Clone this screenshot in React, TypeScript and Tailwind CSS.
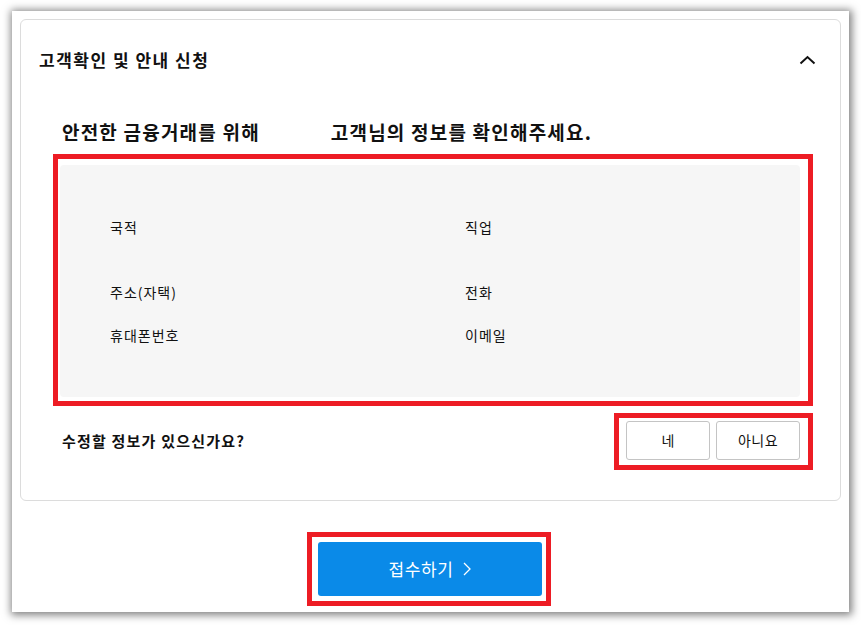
import React from "react";

const font = { fontFamily: '"Noto Sans CJK KR", "Noto Sans", sans-serif' };

function ChevronUp() {
  return (
    <svg width="17" height="10" viewBox="0 0 17 10" fill="none">
      <path d="M1.5 8.5 L8.5 2 L15.5 8.5" stroke="#111" strokeWidth="2" />
    </svg>
  );
}

function ChevronRight() {
  return (
    <svg width="8" height="14" viewBox="0 0 8 14" fill="none">
      <path d="M1 1 L7 7 L1 13" stroke="#fff" strokeWidth="1.3" />
    </svg>
  );
}

const fields = [
  ["국적", "직업"],
  ["주소(자택)", "전화"],
  ["휴대폰번호", "이메일"],
];

export default function App() {
  return (
    <div className="min-h-[625px] w-[861px] bg-white pt-[11px] pl-[12px] text-[#111]" style={font}>
      <div className="flex h-[601px] w-[837px] flex-col bg-white shadow-[1px_1px_8px_2px_rgba(0,0,0,0.5)]">
        {/* card */}
        <div className="mx-[8px] mt-[8px] flex flex-col rounded-md border border-[#dcdcdc] pb-[30px]">
          <div className="flex h-[80px] items-center justify-between pl-[18px] pr-[24px]">
            <span className="text-[17px] font-bold tracking-[1.5px]">고객확인 및 안내 신청</span>
            <ChevronUp />
          </div>

          <div className="mt-[19px] flex h-[26px] items-center pl-[41px] text-[19px] font-bold leading-[26px] tracking-[1.2px]">
            <span>안전한 금융거래를 위해</span>
            <span className="ml-[71px]">고객님의 정보를 확인해주세요.</span>
          </div>

          <div className="mt-[9px] ml-[32px] mr-[27px] border-[5px] border-[#ed1c24] pt-[6px] pb-[4px] pl-[2px] pr-[8px]">
            <div className="h-[232px] rounded-[4px] bg-[#f6f6f6] pt-[52px] pl-[50px] text-[14px] leading-[20px] tracking-[1px]">
              <div className="grid grid-cols-[355px_1fr]">
                <span>{fields[0][0]}</span>
                <span>{fields[0][1]}</span>
              </div>
              <div className="mt-[45px] grid grid-cols-[355px_1fr]">
                <span>{fields[1][0]}</span>
                <span>{fields[1][1]}</span>
              </div>
              <div className="mt-[23px] grid grid-cols-[355px_1fr]">
                <span>{fields[2][0]}</span>
                <span>{fields[2][1]}</span>
              </div>
            </div>
          </div>

          <div className="mt-[7px] ml-[41px] mr-[27px] flex items-center justify-between">
            <span className="text-[15px] font-semibold tracking-[1.2px]">수정할 정보가 있으신가요?</span>
            <div className="flex gap-[6px] border-[5px] border-[#ed1c24] pt-[3px] pb-[5px] pl-[7px] pr-[8px]">
              <button className="h-[39px] w-[84px] rounded-[3px] border border-[#c4c4c4] bg-white text-[14px]">네</button>
              <button className="h-[39px] w-[84px] rounded-[3px] border border-[#c4c4c4] bg-white text-[14px] tracking-[0.5px]">아니요</button>
            </div>
          </div>
        </div>

        <div className="mt-[31px] flex justify-center pr-[3px]">
          <div className="border-[5px] border-[#ed1c24] pt-[5px] pb-[5px] pl-[6px] pr-[4px]">
            <button className="flex h-[54px] w-[224px] items-center justify-center gap-[10px] rounded-[3px] bg-[#0a8ae8] text-[17px] tracking-[0.6px] text-white">
              <span>접수하기</span>
              <ChevronRight />
            </button>
          </div>
        </div>
      </div>
    </div>
  );
}
